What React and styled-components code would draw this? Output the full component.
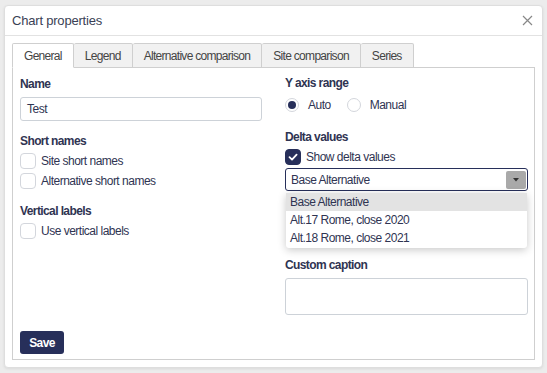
import styled, { createGlobalStyle } from "styled-components"

const navy = "#272f5a"
const text = "#2f3452"

const GlobalStyle = createGlobalStyle`
	html, body {
		margin: 0;
		padding: 0;
		background: #ececec;
		font-family: "Liberation Sans", Arial, sans-serif;
		letter-spacing: -0.5px;
		color: ${text};
	}
`

const tabs = ["General", "Legend", "Alternative comparison", "Site comparison", "Series"]
const options = ["Base Alternative", "Alt.17 Rome, close 2020", "Alt.18 Rome, close 2021"]

function Checkbox({ checked, label }) {
	return (
		<StyledCheckRow>
			<StyledBox $checked={checked}>
				{checked && (
					<svg width="10" height="10" viewBox="0 0 10 10">
						<path d="M1.5 5.2 L4 7.6 L8.6 2.6" fill="none" stroke="#fff" strokeWidth="1.8" strokeLinecap="round" strokeLinejoin="round" />
					</svg>
				)}
			</StyledBox>
			<span>{label}</span>
		</StyledCheckRow>
	)
}

function Radio({ checked, label }) {
	return (
		<StyledRadioItem>
			<StyledRadioCircle $checked={checked} />
			<span>{label}</span>
		</StyledRadioItem>
	)
}

export default function App() {
	return (
		<>
			<GlobalStyle />
			<StyledBackdrop>
				<StyledModal>
					<StyledHeader>
						<span>Chart properties</span>
						<svg width="11" height="11" viewBox="0 0 11 11">
							<path d="M1 1 L10 10 M10 1 L1 10" stroke="#888" strokeWidth="1.2" />
						</svg>
					</StyledHeader>
					<StyledBody>
						<StyledTabs>
							{tabs.map((tab, index) => (
								<StyledTab key={tab} $active={index === 0}>
									{tab}
								</StyledTab>
							))}
						</StyledTabs>
						<StyledPanel>
							<StyledGrid>
								<StyledColumn>
									<StyledLabel>Name</StyledLabel>
									<StyledInput>Test</StyledInput>
									<StyledLabel $top={12} $bottom={2}>Short names</StyledLabel>
									<Checkbox label="Site short names" />
									<Checkbox label="Alternative short names" />
									<StyledLabel $top={12} $bottom={2}>Vertical labels</StyledLabel>
									<Checkbox label="Use vertical labels" />
								</StyledColumn>
								<StyledColumn>
									<StyledLabel $top={-1} $bottom={4}>Y axis range</StyledLabel>
									<StyledRadioRow>
										<Radio checked label="Auto" />
										<Radio label="Manual" />
									</StyledRadioRow>
									<StyledLabel $top={14} $bottom={2}>Delta values</StyledLabel>
									<Checkbox checked label="Show delta values" />
									<StyledSelectWrap>
										<StyledSelect>
											<span>Base Alternative</span>
											<StyledCaret>
												<svg width="6" height="4" viewBox="0 0 6 4">
													<path d="M0 0 H6 L3 3.5 Z" fill="#333" />
												</svg>
											</StyledCaret>
										</StyledSelect>
										<StyledMenu>
											{options.map((option, index) => (
												<StyledOption key={option} $active={index === 0}>
													{option}
												</StyledOption>
											))}
										</StyledMenu>
									</StyledSelectWrap>
									<StyledLabel $top={66}>Custom caption</StyledLabel>
									<StyledTextarea />
								</StyledColumn>
							</StyledGrid>
							<StyledSave>Save</StyledSave>
						</StyledPanel>
					</StyledBody>
				</StyledModal>
			</StyledBackdrop>
		</>
	)
}

const StyledBackdrop = styled.div`
	width: 547px;
	height: 373px;
	padding: 5px 4px 0 4px;
	box-sizing: border-box;
	background: #ececec;
`

const StyledModal = styled.div`
	width: 539px;
	height: 363px;
	box-sizing: border-box;
	background: #fff;
	border: 1px solid #dedede;
	border-radius: 4px;
	box-shadow: 0 1px 3px rgba(0, 0, 0, 0.08);
`

const StyledHeader = styled.div`
	height: 29px;
	display: flex;
	align-items: center;
	justify-content: space-between;
	padding: 0 9px 0 7px;
	border-bottom: 1px solid #e2e2e2;
	font-size: 13px;
	letter-spacing: -0.2px;
	color: #3a3f55;

	svg {
		display: block;
	}
`

const StyledBody = styled.div`
	padding: 7px 7px 0 7px;
`

const StyledTabs = styled.div`
	display: flex;
	height: 25px;
`

const StyledTab = styled.div`
	display: flex;
	align-items: center;
	padding: 0 11px;
	box-sizing: border-box;
	height: 25px;
	font-size: 12px;
	letter-spacing: -0.7px;
	color: #444;
	border: 1px solid #cfcfcf;
	border-left-width: ${(p) => (p.$active ? "1px" : "0")};
	border-bottom: ${(p) => (p.$active ? "1px solid #fff" : "1px solid #cfcfcf")};
	background: ${(p) => (p.$active ? "#fff" : "#f1f1f1")};
	border-radius: 2px 2px 0 0;
	position: relative;
	z-index: 1;
`

const StyledPanel = styled.div`
	margin-top: -1px;
	height: 293px;
	box-sizing: border-box;
	border: 1px solid #cfcfcf;
	padding: 8px 7px 0 7px;
	display: flex;
	flex-direction: column;
`

const StyledGrid = styled.div`
	display: grid;
	grid-template-columns: 242px 242px;
	column-gap: 23px;
`

const StyledColumn = styled.div`
	display: flex;
	flex-direction: column;
	align-items: flex-start;
`

const StyledLabel = styled.div`
	font-size: 12px;
	font-weight: 700;
	line-height: 16px;
	letter-spacing: -0.6px;
	color: ${text};
	margin-top: ${(p) => p.$top || 0}px;
	margin-bottom: ${(p) => (p.$bottom === undefined ? 5 : p.$bottom)}px;
`

const StyledInput = styled.div`
	width: 242px;
	height: 24px;
	box-sizing: border-box;
	border: 1px solid #cdd2d8;
	border-radius: 3px;
	padding: 0 6px;
	display: flex;
	align-items: center;
	font-size: 12px;
	color: ${text};
`

const StyledCheckRow = styled.div`
	display: flex;
	align-items: center;
	gap: 5px;
	height: 20px;
	font-size: 12px;
	color: ${text};
`

const StyledBox = styled.div`
	width: 16px;
	height: 16px;
	box-sizing: border-box;
	border-radius: 4px;
	border: 1px solid ${(p) => (p.$checked ? navy : "#d3d6dc")};
	background: ${(p) => (p.$checked ? navy : "#fff")};
	display: flex;
	align-items: center;
	justify-content: center;
`

const StyledRadioRow = styled.div`
	display: flex;
	gap: 16px;
	height: 20px;
	align-items: center;
`

const StyledRadioItem = styled.div`
	display: flex;
	align-items: center;
	gap: 9px;
	font-size: 12px;
	color: ${text};
`

const StyledRadioCircle = styled.div`
	width: 14px;
	height: 14px;
	box-sizing: border-box;
	border-radius: 50%;
	border: 1px solid #d3d6dc;
	background: #fff;
	display: flex;
	align-items: center;
	justify-content: center;

	&::after {
		content: "";
		display: ${(p) => (p.$checked ? "block" : "none")};
		width: 8px;
		height: 8px;
		border-radius: 50%;
		background: ${navy};
	}
`

const StyledSelectWrap = styled.div`
	position: relative;
	margin-top: 1px;
	width: 243px;
`

const StyledSelect = styled.div`
	height: 23px;
	box-sizing: border-box;
	border: 1px solid ${navy};
	border-radius: 3px;
	display: flex;
	align-items: center;
	justify-content: space-between;
	padding: 0 1px 0 5px;
	font-size: 12px;
	color: ${text};
`

const StyledCaret = styled.div`
	width: 20px;
	height: 18px;
	background: #a9a9a9;
	border-radius: 2px;
	display: flex;
	align-items: center;
	justify-content: center;
`

const StyledMenu = styled.div`
	position: absolute;
	top: 25px;
	left: 1px;
	right: 1px;
	background: #fff;
	border-radius: 3px;
	box-shadow: 0 2px 8px rgba(0, 0, 0, 0.22);
	padding-bottom: 1px;
	z-index: 2;
`

const StyledOption = styled.div`
	height: 18px;
	display: flex;
	align-items: center;
	padding: 0 4px;
	font-size: 12px;
	color: ${text};
	background: ${(p) => (p.$active ? "#e3e3e3" : "transparent")};
`

const StyledTextarea = styled.div`
	width: 243px;
	height: 37px;
	box-sizing: border-box;
	border: 1px solid #cdd2d8;
	border-radius: 3px;
`

const StyledSave = styled.button`
	align-self: flex-start;
	margin-top: 16px;
	width: 44px;
	height: 23px;
	border: 0 none;
	border-radius: 3px;
	background: ${navy};
	color: #fff;
	font-family: "Liberation Sans", Arial, sans-serif;
	font-size: 12px;
	font-weight: 700;
	padding: 0;
	letter-spacing: -0.6px;
`
